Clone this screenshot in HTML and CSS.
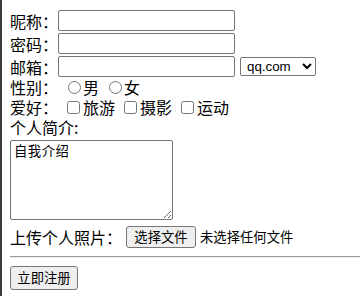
FILE: index.html
```html
<!DOCTYPE html>
<html lang="zh-CN">
<head>
  <meta charset="UTF-8">
  <title>注册</title>
  <link rel="stylesheet" href="styles.css">
</head>
<body>
  <form class="reg-form">
    <div class="row row-input">
      <label>昵称：</label><input type="text" class="text-input">
    </div>
    <div class="row row-input">
      <label>密码：</label><input type="password" class="text-input">
    </div>
    <div class="row row-input">
      <label>邮箱：</label><input type="text" class="text-input">
      <select class="mail-select">
        <option>qq.com</option>
        <option>163.com</option>
        <option>sina.com</option>
      </select>
    </div>
    <div class="row">
      <label>性别：</label>
      <input type="radio" name="sex" class="radio"><span>男</span>
      <input type="radio" name="sex" class="radio"><span>女</span>
    </div>
    <div class="row">
      <label>爱好：</label>
      <input type="checkbox" class="check"><span>旅游</span>
      <input type="checkbox" class="check"><span>摄影</span>
      <input type="checkbox" class="check"><span>运动</span>
    </div>
    <div class="row">个人简介:</div>
    <textarea class="intro">自我介绍</textarea>
    <div class="row row-file">
      <label>上传个人照片：</label>
      <button type="button" class="btn btn-file">选择文件</button>
      <span class="file-name">未选择任何文件</span>
    </div>
    <hr class="divider">
    <button type="button" class="btn btn-submit">立即注册</button>
  </form>
</body>
</html>
```

FILE: styles.css
```css
html {
  border-left: 2px solid #36393d;
  background: #fff;
}
body {
  margin: 8px 0 8px 8px;
  font-family: "Noto Sans CJK SC", "Liberation Sans", sans-serif;
  font-size: 16px;
  line-height: 20px;
  color: #000;
}
.row {
  display: flex;
  align-items: center;
  height: 20px;
  white-space: nowrap;
}
.row-input {
  height: 23px;
  align-items: flex-end;
}
.text-input {
  width: 177px;
  height: 21px;
  box-sizing: border-box;
  margin: 0;
  border: 1px solid #767676;
  border-radius: 2px;
  padding: 1px 2px;
  font-size: 13px;
}
.mail-select {
  width: 76px;
  height: 19px;
  box-sizing: border-box;
  margin: 0 0 1px 5px;
  border: 1px solid #767676;
  border-radius: 2px;
  padding: 0 0 0 2px;
  font-family: "Liberation Sans", Arial, sans-serif;
  font-size: 13.33px;
  background: #fff;
  color: #000;
}
.radio {
  width: 13px;
  height: 13px;
  margin: 1px 2px 0 10px;
}
.check {
  width: 13px;
  height: 13px;
  margin: 1px 3px 0 9px;
}
.intro {
  display: block;
  width: 163px;
  height: 80px;
  box-sizing: border-box;
  margin: 3px 0 0 0;
  border: 1px solid #767676;
  border-radius: 2px;
  padding: 2px 3px;
  font-family: "Noto Sans CJK SC", monospace;
  font-size: 13.33px;
  line-height: 16px;
  letter-spacing: 0.5px;
  resize: both;
}
.row-file {
  height: 26px;
  padding-top: 4px;
}
.btn {
  box-sizing: border-box;
  height: 22px;
  margin: 0;
  padding: 0 6px;
  border: 1px solid #767676;
  border-radius: 3px;
  background: #efefef;
  color: #000;
  font-family: "Noto Sans CJK SC", sans-serif;
  font-size: 13.33px;
  line-height: 18px;
}
.btn-file {
  width: 70px;
  margin-left: 4px;
  padding: 0;
}
.file-name {
  margin-left: 4px;
  font-size: 13.33px;
}
.divider {
  margin: 6px 0 8px 0;
  border: 0;
  border-top: 1px solid #9a9a9a;
  border-bottom: 1px solid #eee;
  height: 0;
}
.btn-submit {
  height: 24px;
  width: 68px;
  padding: 0;
}
```
